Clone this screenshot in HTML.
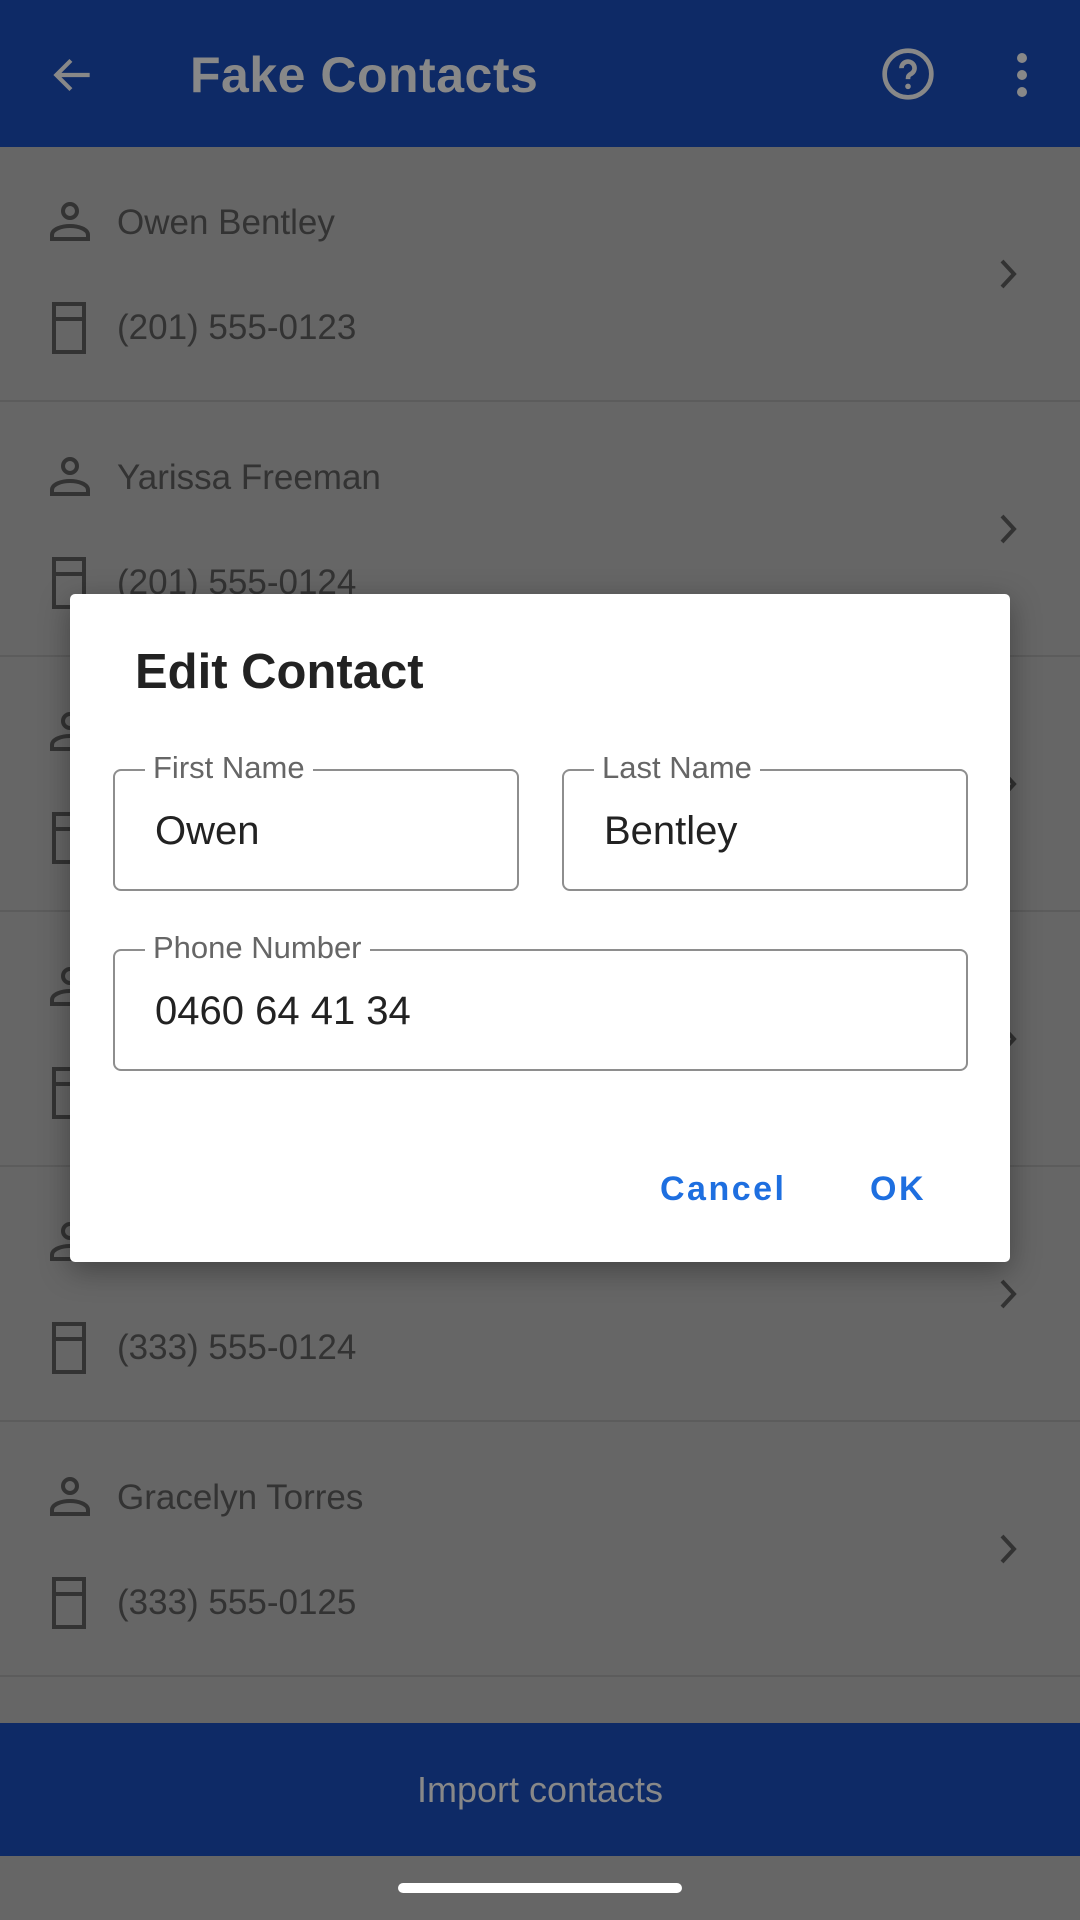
<!DOCTYPE html>
<html><head><meta charset="utf-8"><style>
*{margin:0;padding:0;box-sizing:border-box}
body{width:1080px;height:1920px;background:#666;position:relative;overflow:hidden;font-family:"Liberation Sans",sans-serif}
.bar{position:absolute;left:0;top:0;width:1080px;height:147px;background:#0e2a66}
.title{position:absolute;left:190px;top:46px;font-size:50px;font-weight:bold;color:#888;letter-spacing:0.5px}
.row{position:absolute;left:0;width:1080px;height:255px;border-bottom:2px solid #5c5c5c}
.t{position:absolute;left:117px;font-size:35px;color:#333}
.ic{position:absolute;left:48px}
.chev{position:absolute;left:992px}
.bottom{position:absolute;left:0;top:1723px;width:1080px;height:133px;background:#0e2a66;color:#888;font-size:36px;text-align:center;line-height:133px}
.pill{position:absolute;left:398px;top:1883px;width:284px;height:10px;border-radius:5px;background:#fff}
.dlg{position:absolute;left:70px;top:594px;width:940px;height:668px;background:#fff;border-radius:5px;box-shadow:0 8px 30px rgba(0,0,0,.35)}
.dt{position:absolute;left:65px;top:50px;font-size:49px;font-weight:bold;color:#222}
.fld{position:absolute;border:2px solid #8e8e8e;border-radius:8px}
.lbl{position:absolute;left:30px;top:-21px;background:#fff;padding:0 8px;font-size:31px;color:#666}
.val{position:absolute;left:40px;font-size:40px;color:#222}
.btn{position:absolute;top:576px;font-size:34px;font-weight:bold;color:#1e6fe0;letter-spacing:2.5px}
</style></head><body>
<div class="bar">
<svg style="position:absolute;left:48px;top:50px" width="50" height="50" viewBox="0 0 24 24"><path d="M20 12H5M11 5l-7 7 7 7" fill="none" stroke="#888" stroke-width="2"/></svg>
<div class="title">Fake Contacts</div>
<svg style="position:absolute;left:880px;top:46px" width="56" height="56" viewBox="0 0 24 24"><circle cx="12" cy="12" r="10" fill="none" stroke="#888" stroke-width="2"/><path d="M9.2 9.5a2.8 2.8 0 1 1 4 2.5c-1 .5-1.2 1-1.2 2.2" fill="none" stroke="#888" stroke-width="2"/><circle cx="12" cy="17.3" r="1.2" fill="#888"/></svg>
<svg style="position:absolute;left:1010px;top:50px" width="24" height="50"><circle cx="12" cy="8" r="5" fill="#888"/><circle cx="12" cy="25" r="5" fill="#888"/><circle cx="12" cy="42" r="5" fill="#888"/></svg>
</div>

<div class="row" style="top:147px"></div>
<div class="row" style="top:402px"></div>
<div class="row" style="top:657px"></div>
<div class="row" style="top:912px"></div>
<div class="row" style="top:1167px"></div>
<div class="row" style="top:1422px"></div>

<svg width="0" height="0" style="position:absolute"><defs>
<g id="person"><circle cx="22" cy="12" r="7" fill="none" stroke="#333" stroke-width="4"/><path d="M4 40v-4c0-6 10-9 18-9s18 3 18 9v4z" fill="none" stroke="#333" stroke-width="4"/></g>
<g id="phone"><rect x="6" y="3" width="30" height="48" fill="none" stroke="#333" stroke-width="4"/><path d="M6 18h30" stroke="#333" stroke-width="4"/></g>
<g id="chev"><path d="M10 6l12 13-12 13" fill="none" stroke="#333" stroke-width="4"/></g>
</defs></svg>

<div style="position:absolute;left:0;top:147px;width:1080px">
<svg class="ic" style="top:52px" width="46" height="46"><use href="#person"/></svg><div class="t" style="top:56px">Owen Bentley</div>
<svg class="ic" style="top:154px" width="46" height="56"><use href="#phone"/></svg><div class="t" style="top:161px">(201) 555-0123</div>
<svg class="chev" style="top:108px" width="36" height="40"><use href="#chev"/></svg></div>
<div style="position:absolute;left:0;top:402px;width:1080px">
<svg class="ic" style="top:52px" width="46" height="46"><use href="#person"/></svg><div class="t" style="top:56px">Yarissa Freeman</div>
<svg class="ic" style="top:154px" width="46" height="56"><use href="#phone"/></svg><div class="t" style="top:161px">(201) 555-0124</div>
<svg class="chev" style="top:108px" width="36" height="40"><use href="#chev"/></svg></div>
<div style="position:absolute;left:0;top:657px;width:1080px">
<svg class="ic" style="top:52px" width="46" height="46"><use href="#person"/></svg>
<svg class="ic" style="top:154px" width="46" height="56"><use href="#phone"/></svg>
<svg class="chev" style="top:108px" width="36" height="40"><use href="#chev"/></svg></div>
<div style="position:absolute;left:0;top:912px;width:1080px">
<svg class="ic" style="top:52px" width="46" height="46"><use href="#person"/></svg>
<svg class="ic" style="top:154px" width="46" height="56"><use href="#phone"/></svg>
<svg class="chev" style="top:108px" width="36" height="40"><use href="#chev"/></svg></div>
<div style="position:absolute;left:0;top:1167px;width:1080px">
<svg class="ic" style="top:52px" width="46" height="46"><use href="#person"/></svg>
<svg class="ic" style="top:154px" width="46" height="56"><use href="#phone"/></svg><div class="t" style="top:161px">(333) 555-0124</div>
<svg class="chev" style="top:108px" width="36" height="40"><use href="#chev"/></svg></div>
<div style="position:absolute;left:0;top:1422px;width:1080px">
<svg class="ic" style="top:52px" width="46" height="46"><use href="#person"/></svg><div class="t" style="top:56px">Gracelyn Torres</div>
<svg class="ic" style="top:154px" width="46" height="56"><use href="#phone"/></svg><div class="t" style="top:161px">(333) 555-0125</div>
<svg class="chev" style="top:108px" width="36" height="40"><use href="#chev"/></svg></div>

<div class="bottom">Import contacts</div>
<div class="pill"></div>

<div class="dlg">
<div class="dt">Edit Contact</div>
<div class="fld" style="left:43px;top:175px;width:406px;height:122px"><div class="lbl">First Name</div><div class="val" style="top:38px">Owen</div></div>
<div class="fld" style="left:492px;top:175px;width:406px;height:122px"><div class="lbl">Last Name</div><div class="val" style="top:38px">Bentley</div></div>
<div class="fld" style="left:43px;top:355px;width:855px;height:122px"><div class="lbl">Phone Number</div><div class="val" style="top:38px">0460 64 41 34</div></div>
<div class="btn" style="left:590px">Cancel</div>
<div class="btn" style="left:800px">OK</div>
</div>
</body></html>
